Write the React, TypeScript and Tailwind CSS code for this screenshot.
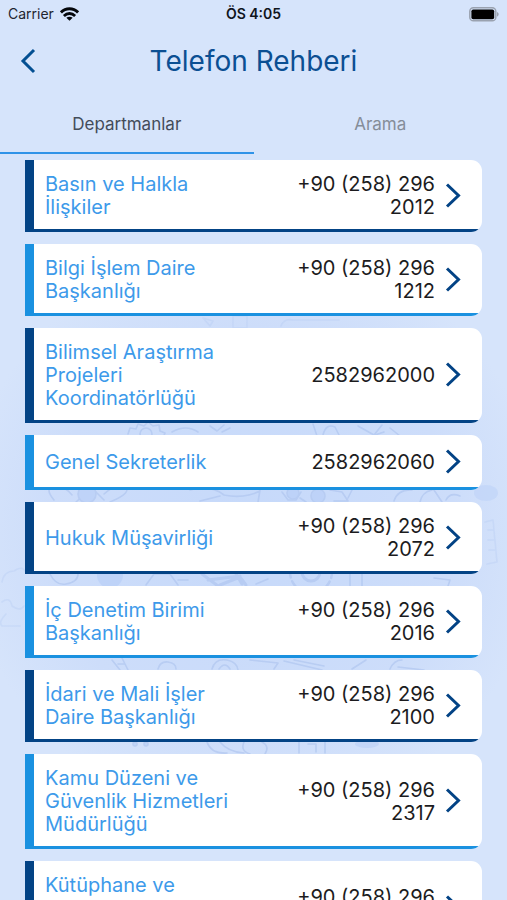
import { useState } from 'react';

type Department = {
  name: string;
  phone: string;
};

const departments: Department[] = [
  { name: 'Basın ve Halkla İlişkiler', phone: '+90 (258) 296 2012' },
  { name: 'Bilgi İşlem Daire Başkanlığı', phone: '+90 (258) 296 1212' },
  { name: 'Bilimsel Araştırma Projeleri Koordinatörlüğü', phone: '2582962000' },
  { name: 'Genel Sekreterlik', phone: '2582962060' },
  { name: 'Hukuk Müşavirliği', phone: '+90 (258) 296 2072' },
  { name: 'İç Denetim Birimi Başkanlığı', phone: '+90 (258) 296 2016' },
  { name: 'İdari ve Mali İşler Daire Başkanlığı', phone: '+90 (258) 296 2100' },
  { name: 'Kamu Düzeni ve Güvenlik Hizmetleri Müdürlüğü', phone: '+90 (258) 296 2317' },
  { name: 'Kütüphane ve Dokümantasyon Daire Başkanlığı', phone: '+90 (258) 296 2200' },
];

const tabs = ['Departmanlar', 'Arama'];

function StatusBar() {
  return (
    <div className="grid h-7 grid-cols-3 items-center px-2 text-sm text-[#1f2530]">
      <div className="flex items-center gap-1.5">
        <span>Carrier</span>
        <svg width="19" height="14" viewBox="0 0 18 13" fill="none" stroke="#05070b" strokeWidth="2.7">
          <path d="M0.9 5 C5.5 0.4 12.5 0.4 17.1 5" />
          <path d="M3.7 8.3 C6.8 5.3 11.2 5.3 14.3 8.3" />
          <path d="M9 13 L6 10.1 C7.6 8.7 10.4 8.7 12 10.1 Z" fill="#05070b" stroke="none" />
        </svg>
      </div>
      <span className="text-center font-semibold text-[#10151d]">ÖS 4:05</span>
      <svg className="justify-self-end" width="30" height="15" viewBox="0 0 30 15">
        <rect x="0.8" y="0.8" width="26" height="13" rx="3.6" fill="none" stroke="#9aa2b0" strokeWidth="1.5" />
        <rect x="2.4" y="2.4" width="22.8" height="9.8" rx="1.8" fill="#000" />
        <path d="M28 5 C30.2 5.8 30.2 8.8 28 9.6 Z" fill="#9aa2b0" />
      </svg>
    </div>
  );
}

function Doodles() {
  return (
    <svg
      className="absolute inset-0 h-full w-full"
      viewBox="0 0 507 900"
      preserveAspectRatio="xMidYMid slice"
      aria-hidden="true"
    >
      <defs>
        <radialGradient id="glow" gradientUnits="userSpaceOnUse" cx="253" cy="530" r="290">
          <stop offset="0" stopColor="#c6d9fa" />
          <stop offset="0.7" stopColor="#cdddfa" />
          <stop offset="1" stopColor="#d6e4fb" />
        </radialGradient>
      </defs>
      <rect width="507" height="900" fill="url(#glow)" />
      <g fill="none" stroke="#b0c6ef" strokeWidth="1.6" strokeLinejoin="round" strokeLinecap="round" opacity="0.7">
        {/* faint row at the top of the pattern */}
        <path d="M203 318 l10 3 l-3 5 Z M233 316 h14 v12 h-14 Z M281 326 q3 -8 12 -6 h46" opacity="0.4" />
        {/* gears and papers above the fourth card */}
        <path d="M128 434 l2 -6 l6 1 l2 -5 l6 2 l4 -4 l5 4 l6 -1 l1 6 l5 2 l-2 5" />
        <circle cx="146" cy="434" r="6" />
        <path d="M172 432 q14 -8 26 0 M210 426 l7 5 l7 -6 M222 432 l8 -4" />
        <path d="M313 424 l4 12 M323 435 q3 -12 12 -8 l4 8 M358 426 l16 9 l8 -10 M372 436 l12 -4 M390 428 l10 8" />
        {/* atom, book, molecule */}
        <path d="M54 500 q-10 -12 0 -14 q10 -1 18 9 M76 502 q20 -18 26 -16 M104 500 l-12 -12 M110 502 q24 -10 14 -16 q-8 -3 -20 8" />
        <circle cx="87" cy="494" r="9" fill="#b9cff6" />
        <path d="M190 490 q20 -6 34 5 q20 4 36 -4 M200 501 l20 -5 M260 490 l-2 12" />
        <path d="M282 492 l6 8 h8 l5 -8 M300 498 l6 4 M330 490 l12 2 l6 9 h-14 M352 490 l-4 8" />
        <circle cx="293" cy="493" r="6" fill="#b9cff6" />
        <circle cx="318" cy="496" r="7" fill="#b9cff6" />
        <path d="M394 501 q4 -12 18 -11 M420 502 q2 -10 12 -12 M434 490 l8 12 M446 500 q4 -8 14 -4" />
        <ellipse cx="486" cy="493" rx="12" ry="8" fill="#c1d5f8" stroke="none" />
        {/* magnifier, hexagons, target */}
        <path d="M50 574 q6 12 16 10 q12 -2 12 -10 M146 585 l8 -11 h16 l8 11 M170 574 l6 -5 M178 580 h10" />
        <circle cx="110" cy="575" r="13" fill="#b9cff6" stroke="none" />
        <path d="M202 574 l16 12 M208 580 l32 -4 M220 585 l20 -8 l6 8 M236 574 l6 10" strokeWidth="3" />
        <circle cx="311" cy="572" r="9" strokeWidth="3" />
        <circle cx="311" cy="572" r="21" strokeWidth="2.5" strokeDasharray="6 4" />
        <path d="M350 574 v12 M362 574 v12 M434 578 l16 2 l-2 6 M256 584 l12 -5" />
        {/* paper and gear on both margins */}
        <path d="M2 582 q2 -11 12 -11 q8 -6 12 1 M2 602 q8 -6 10 4 q8 6 12 0 M6 614 q-8 8 -4 12 h18" opacity="0.4" />
        <path d="M485 522 l8 -2 l4 42 l-10 2 M488 530 h5 M488 540 h6 M489 550 h6" opacity="0.4" />
        {/* ruler, cog, map */}
        <path d="M112 660 l8 10 M122 658 l6 12 M118 664 h6 M158 669 q2 -8 10 -7 q8 1 8 7 M212 669 q3 -11 15 -9 q10 2 11 10 M219 669 q6 -8 11 0" />
        <path d="M250 660 l28 3 l-4 6 M284 661 l38 9 M294 660 l30 6 M352 669 l14 -9 M390 669 q4 -9 12 -9 M398 667 l26 3" />
        {/* globe and bottle */}
        <path d="M207 742 q4 12 20 11 M220 742 q8 10 24 11 M244 742 q-4 9 6 12 M262 742 q8 4 3 12 M299 742 v11 M325 742 v11 M308 744 h8 v8" />
        <ellipse cx="367" cy="744" rx="12" ry="4" fill="#bdd2f7" stroke="none" />
        <circle cx="135" cy="744" r="2" fill="#b9cff6" />
        <circle cx="146" cy="744" r="2" fill="#b9cff6" />
      </g>
    </svg>
  );
}

function DepartmentRow({ department, dark }: { department: Department; dark: boolean }) {
  return (
    <li className="overflow-hidden rounded-r-[11px]">
      <a
        href={`tel:${department.phone.replace(/[^+\d]/g, '')}`}
        className={`flex items-center border-b-[3px] border-l-[9px] bg-white pt-[13px] pr-5 pb-2.5 pl-[11px] text-xl leading-[23px] ${
          dark ? 'border-[#034385]' : 'border-[#1a91e0]'
        }`}
      >
        <span className="flex-1 text-[#3d9aea]">{department.name}</span>
        <span className="w-[184px] shrink-0 pl-4 text-right text-[#1c1c1e]">{department.phone}</span>
        <svg className="ml-2 -my-px shrink-0" width="19" height="31" viewBox="0 0 19 31" fill="none" stroke="#034385" strokeWidth="3">
          <path d="M4 3.5 L15.5 14.5 L4 25.5" />
        </svg>
      </a>
    </li>
  );
}

export default function App() {
  const [activeTab, setActiveTab] = useState('Departmanlar');

  return (
    <main className="relative flex h-screen flex-col overflow-hidden bg-[#d6e4fb] font-['Inter','Noto_Sans',sans-serif]">
      <Doodles />

      <div className="relative">
        <StatusBar />

        <header className="grid h-[66px] grid-cols-[56px_1fr_56px] items-center">
          <button type="button" aria-label="Geri" className="flex h-10 items-center pl-5">
            <svg width="16" height="26" viewBox="0 0 16 26" fill="none" stroke="#034f92" strokeWidth="3">
              <path d="M14 2 L3 13 L14 24" />
            </svg>
          </button>
          <h1 className="text-center text-[28px] text-[#0b4f93]">Telefon Rehberi</h1>
        </header>

        <nav className="grid grid-cols-2" role="tablist">
          {tabs.map((tab) => (
            <button
              key={tab}
              type="button"
              role="tab"
              aria-selected={activeTab === tab}
              onClick={() => setActiveTab(tab)}
              className={`h-[60px] border-b-2 pt-1 text-[17px] ${
                activeTab === tab ? 'border-[#2f93e8] text-[#434c5a]' : 'border-transparent text-[#858d99]'
              }`}
            >
              {tab}
            </button>
          ))}
        </nav>
      </div>

      <ul className="relative flex min-h-0 flex-1 flex-col gap-3 overflow-y-auto px-[25px] py-1.5 [scrollbar-width:none] *:shrink-0">
        {departments.map((department, index) => (
          <DepartmentRow key={department.name} department={department} dark={index % 2 === 0} />
        ))}
      </ul>
    </main>
  );
}
